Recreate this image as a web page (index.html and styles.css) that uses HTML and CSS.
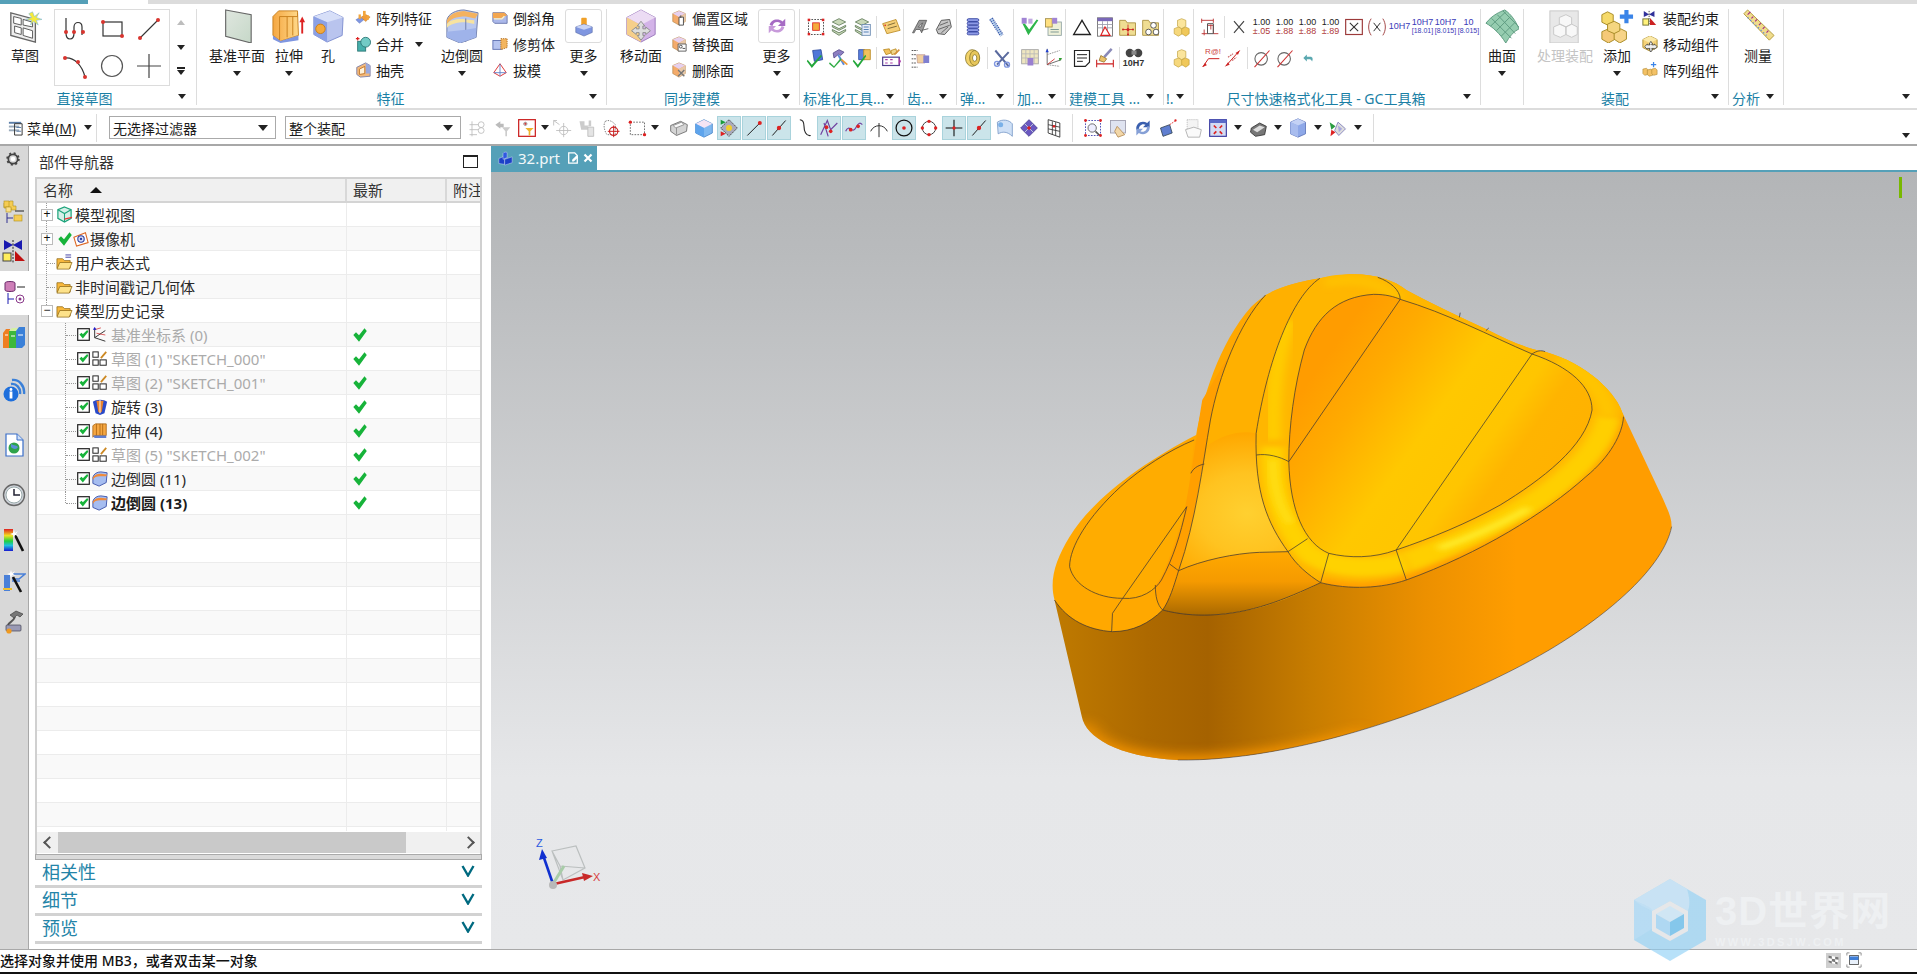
FILE: index.html
```html
<!DOCTYPE html>
<html lang="zh">
<head>
<meta charset="utf-8">
<title>部件导航器</title>
<link rel="stylesheet" href="styles.css">
</head>
<body>
<svg class="defs" xmlns="http://www.w3.org/2000/svg">
<defs>
<linearGradient id="gBlue" x1="0" y1="0" x2="0" y2="1"><stop offset="0" stop-color="#c9d4f5"/><stop offset="1" stop-color="#6f86d6"/></linearGradient>
<linearGradient id="gOr" x1="0" y1="0" x2="1" y2="0"><stop offset="0" stop-color="#f5a742"/><stop offset="1" stop-color="#ffd98a"/></linearGradient>
<linearGradient id="gYe" x1="0" y1="0" x2="0" y2="1"><stop offset="0" stop-color="#fff0a8"/><stop offset="1" stop-color="#e8b84a"/></linearGradient>
<linearGradient id="gPlane" x1="0" y1="0" x2="1" y2="1"><stop offset="0" stop-color="#dfe6df"/><stop offset="1" stop-color="#c6d8c8"/></linearGradient>
</defs>
<symbol id="sketch" viewBox="0 0 36 36"><path d="M3 4 29 11V35L3 28Z" fill="#eee" stroke="#666" stroke-width="1.4"/><path d="M6 8 14 10V17L6 15ZM16 11 26 14V19L16 17ZM7 18 14 20V27L7 25ZM16 20 26 23V31L16 28Z" fill="#fff" stroke="#555"/><path d="M26 3 28 8 33 4 30 9 36 11 30 12 32 17 27 13 24 17 25 12 19 11 25 9 22 5Z" fill="#f6ea3a" stroke="#7ab8e0" stroke-width=".6"/></symbol>
<symbol id="spline" viewBox="0 0 30 30"><path d="M6 4V19C6 27 14 27 14 19V13C14 7 22 7 22 13V21" fill="none" stroke="#333" stroke-width="1.2"/><g fill="#d8352f"><circle cx="6" cy="18" r="2"/><circle cx="14" cy="18" r="2"/><circle cx="23" cy="18" r="2"/></g></symbol>
<symbol id="srect" viewBox="0 0 30 30"><rect x="6" y="8" width="19" height="14" fill="none" stroke="#333" stroke-width="1.2"/><g fill="#d8352f"><circle cx="6" cy="8" r="2"/><circle cx="25" cy="22" r="2"/></g></symbol>
<symbol id="sline" viewBox="0 0 30 30"><path d="M6 24 24 6" stroke="#333" stroke-width="1.1"/><g fill="#d8352f"><circle cx="6" cy="24" r="2"/><circle cx="24" cy="6" r="2"/></g></symbol>
<symbol id="sarc" viewBox="0 0 30 30"><path d="M5 7C14 6 22 14 25 26" fill="none" stroke="#333" stroke-width="1.2"/><g fill="#d8352f"><circle cx="5" cy="7" r="2"/><circle cx="18" cy="11" r="2"/><circle cx="25" cy="26" r="2"/></g></symbol>
<symbol id="scirc" viewBox="0 0 30 30"><circle cx="15" cy="15" r="10.5" fill="none" stroke="#555" stroke-width="1.2"/></symbol>
<symbol id="splus" viewBox="0 0 30 30"><path d="M15 3V27M3 15H27" stroke="#444" stroke-width="1.2"/></symbol>
<symbol id="datum" viewBox="0 0 36 36"><path d="M6 1 33 6V36L6 29Z" fill="url(#gPlane)" stroke="#666" stroke-width="1.2"/></symbol>
<symbol id="extrude" viewBox="0 0 36 36"><path d="M1 8 7 2H27L28 28 9 34 1 28Z" fill="url(#gOr)" stroke="#c8801e"/><path d="M8 8H27V4M8 8V33M16 8V30M22 8V28" fill="none" stroke="#c8801e"/><path d="M1 28 9 34 28 28 28 33 9 36 1 32Z" fill="#7f96e0"/><path d="M32 26V13" stroke="#d22" stroke-width="2"/><path d="M29 14 32 8 35 14Z" fill="#d22"/></symbol>
<symbol id="hole" viewBox="0 0 36 36"><path d="M3 8 20 2 34 9 33 28 17 35 3 27Z" fill="#b9c4ee" stroke="#7f8fd0"/><path d="M3 8 17 14 34 9 20 2Z" fill="#d7dff8"/><path d="M17 14V35L3 27V8Z" fill="#8ba0e4"/><circle cx="10" cy="21" r="5" fill="#f4a93b" stroke="#c97d16"/></symbol>
<symbol id="fillet" viewBox="0 0 36 36"><path d="M2 12C3 5 12 1 20 1L35 4 33 30 16 36 2 30Z" fill="#b9c8ef" stroke="#6c7aa8"/><path d="M2 12C4 6 12 2 20 2L35 5 32 10 22 8C12 8 5 10 2 17Z" fill="#f4b260"/><path d="M2 16C6 11 14 10 22 11L31 12V16L22 14C12 14 5 16 2 20Z" fill="#f7e3a0"/><path d="M22 10V35" stroke="#6c7aa8"/><path d="M2 24 22 22 33 20V30L16 36 2 30Z" fill="#9fb3ea"/></symbol>
<symbol id="pattern" viewBox="0 0 18 18"><path d="M1 11 6 8 10 11 5 15Z" fill="#7f96e0" stroke="#5970bf" stroke-width=".5"/><path d="M7 8 12 5 17 8 12 13Z" fill="#f29b38" stroke="#b06a15" stroke-width=".5"/><rect x="9" y="1" width="3" height="6" fill="#f2a63e"/><rect x="4" y="5" width="2.6" height="5" fill="#f2a63e"/><rect x="13" y="6" width="2.6" height="5" fill="#f2a63e"/></symbol>
<symbol id="unite" viewBox="0 0 18 18"><path d="M1 3H5M3 1V5" stroke="#d22" stroke-width="1.3"/><rect x="3" y="6" width="9" height="11" fill="#46b0ac" stroke="#2c7775"/><circle cx="12" cy="7" r="5.5" fill="#73cbc6" stroke="#2c7775"/></symbol>
<symbol id="shell" viewBox="0 0 18 18"><path d="M2 6 12 1 17 4V16L6 17 2 14Z" fill="#f3b87a" stroke="#7a7ea8"/><path d="M12 1V13H17V4Z" fill="#9aa9de"/><path d="M5 8 11 5V13L5 14Z" fill="#fff3dc" stroke="#c0711e"/></symbol>
<symbol id="chamfer" viewBox="0 0 18 18"><path d="M1 3H14L17 6V15H3L1 13Z" fill="#abb8ea" stroke="#6674aa"/><path d="M1 3H14L17 6 10 9H1Z" fill="#f3a64f"/><path d="M2 10H11L14 7" fill="none" stroke="#fff2c0" stroke-width="1.6"/></symbol>
<symbol id="trim" viewBox="0 0 18 18"><rect x="1" y="5" width="10" height="10" fill="#b6c4f0" stroke="#5c6eb0"/><path d="M10 3H17V13L11 15H10Z" fill="#f3b560" stroke="#b06a15" stroke-dasharray="1.4 1"/></symbol>
<symbol id="draft" viewBox="0 0 18 18"><path d="M9 2 16 12 9 16 2 12Z" fill="#fff" stroke="#d22" stroke-width="1"/><path d="M9 2V16M2 12H16" stroke="#5c7ec8"/></symbol>
<symbol id="morefeat" viewBox="0 0 24 24"><rect x="9" y="3" width="6" height="10" rx="1" fill="#f0a028"/><path d="M3 13 12 10 21 13V19L12 23 3 19Z" fill="#7f96e0" stroke="#52649f" stroke-width=".6"/><path d="M3 13 12 16 21 13 12 10Z" fill="#c9d4f5"/></symbol>
<symbol id="moveface" viewBox="0 0 36 36"><path d="M18 1 33 9V27L18 35 3 27V9Z" fill="#d3b3e8" stroke="#9a78bb"/><path d="M18 1 33 9 18 17 3 9Z" fill="#ecdcf4"/><path d="M3 9 18 17V35L3 27Z" fill="#f6cf8a"/><g stroke="#8d8d8d" stroke-width="1" fill="#ddd"><path d="M18 13 22 18 20 18V21H23V19L28 23 23 27V25H20V28H22L18 33 14 28H16V25H13V27L8 23 13 19V21H16V18H14Z"/></g></symbol>
<symbol id="cubeb" viewBox="0 0 18 18"><path d="M9 1 16 4V13L9 17 2 13V4Z" fill="#f4ab6b" stroke="#b0803f" stroke-width=".7"/><path d="M9 1 16 4 9 8 2 4Z" fill="#e6d0ee"/><path d="M9 8 16 4V13L9 17Z" fill="#e8c8a8"/></symbol>
<symbol id="offset" viewBox="0 0 18 18"><use href="#cubeb"/><path d="M9 8H14V17H9ZM11 6V9" fill="#fff" stroke="#444"/></symbol>
<symbol id="replace" viewBox="0 0 18 18"><use href="#cubeb"/><path d="M8 9H17V17H8Z" fill="#fff" stroke="#555"/><circle cx="11" cy="12" r="1.6" fill="none" stroke="#444"/><path d="M13 14H16" stroke="#444"/></symbol>
<symbol id="delface" viewBox="0 0 18 18"><use href="#cubeb"/><path d="M8 9 15 16M15 9 8 16" stroke="#777" stroke-width="1.6"/></symbol>
<symbol id="syncmore" viewBox="0 0 24 24"><path d="M4 11C5 5 13 3 18 7L21 4V12H13L16 9C12 6 8 8 7 12Z" fill="#a66bc4"/><path d="M20 13C19 19 11 21 6 17L3 20V12H11L8 15C12 18 16 16 17 12Z" fill="#c79ada"/></symbol>
<symbol id="stdbox" viewBox="0 0 24 24"><rect x="3" y="3" width="18" height="18" fill="#fff" stroke="#333" stroke-dasharray="2 1.5"/><rect x="8" y="7" width="8" height="9" fill="#f4ab3b" stroke="#d22"/><g fill="#d22"><rect x="2" y="2" width="3" height="3"/><rect x="19" y="2" width="3" height="3"/><rect x="2" y="19" width="3" height="3"/><rect x="19" y="19" width="3" height="3"/></g></symbol>
<symbol id="stack" viewBox="0 0 24 24"><g fill="#c9d8b8" stroke="#5f7a58"><path d="M12 2 20 6 12 10 4 6Z"/><path d="M4 10 12 14 20 10 20 12 12 16 4 12Z"/><path d="M4 15 12 19 20 15 20 17 12 22 4 17Z"/></g></symbol>
<symbol id="stack2" viewBox="0 0 24 24"><use href="#stack"/><rect x="12" y="9" width="10" height="13" fill="#e8eef8" stroke="#6a8ab0"/><path d="M14 12H20M14 15H20M14 18H20" stroke="#3a6ea8"/></symbol>
<symbol id="tag" viewBox="0 0 24 24"><path d="M2 8 18 3 23 16 7 20Z" fill="#f5cf77" stroke="#ba8a24"/><path d="M8 10 17 7M8 14 19 11" stroke="#6c5a2c"/><circle cx="5" cy="10" r="1" fill="#d22"/></symbol>
<symbol id="bluechk" viewBox="0 0 24 24"><path d="M8 3 18 2 20 14 10 16Z" fill="#4f76d8" stroke="#2c4a9f"/><path d="M2 14 7 20 18 8 19 10 7 24 1 16Z" fill="#23a73a"/></symbol>
<symbol id="hammer" viewBox="0 0 24 24"><path d="M5 6 12 2 18 5 14 9 12 7 6 12Z" fill="#8d7fc2" stroke="#554a8c"/><path d="M11 8 18 20" stroke="#5c8ad8" stroke-width="2.4"/><path d="M1 17 6 22 14 12 15 14 6 24 0 19Z" fill="#32ad46"/><path d="M15 14 22 20" stroke="#ef9a33" stroke-width="2"/></symbol>
<symbol id="bluechk2" viewBox="0 0 24 24"><path d="M8 2H15V14H8Z" fill="#5b82e0" stroke="#2c4a9f"/><path d="M14 2H22V14H14Z" fill="#f1c15c" stroke="#ba8a24"/><path d="M2 14 7 20 16 8 17 10 7 24 1 16Z" fill="#23a73a"/></symbol>
<symbol id="pencilist" viewBox="0 0 24 24"><path d="M3 2 10 1 12 6 6 8Z" fill="#f1c15c" stroke="#ba8a24"/><path d="M12 3 18 1 19 6 13 8Z" fill="#f1d58c" stroke="#ba8a24"/><path d="M16 8 22 2" stroke="#d4903c" stroke-width="2"/><rect x="2" y="11" width="20" height="10" fill="#fff" stroke="#4a3a8a" stroke-width="1.4"/><path d="M5 14H8M11 14H14M5 18H8M11 18H14" stroke="#a83aa8" stroke-width="1.4"/><path d="M21 11 24 16 21 21Z" fill="#a83aa8"/></symbol>
<symbol id="gearA" viewBox="0 0 24 24"><path d="M3 19 11 4H20L14 19 12 15H7L5 19ZM10 12H13L15 7Z" fill="#9a9a9a" stroke="#444" stroke-width=".8"/><path d="M14 16 22 14" stroke="#555"/></symbol>
<symbol id="gearB" viewBox="0 0 24 24"><path d="M4 15 10 4 20 3 22 12 14 21 6 20Z" fill="#c6c6c6" stroke="#444"/><path d="M8 10 18 6M6 15 20 10M10 19 18 12" stroke="#555"/></symbol>
<symbol id="handd" viewBox="0 0 24 24"><path d="M2 3H9M2 8H7M2 13H7M2 18H7M2 23H9" stroke="#333" stroke-dasharray="2 1"/><path d="M8 8H18V18H9Z" fill="#f0cfa0" stroke="#a77" stroke-width=".6"/><rect x="16" y="9" width="7" height="9" fill="#7f7fd0"/></symbol>
<symbol id="coil" viewBox="0 0 24 24"><g fill="#8d9ae6" stroke="#2f3f9e"><rect x="5" y="2" width="14" height="3.4" rx="1.7"/><rect x="5" y="6" width="14" height="3.4" rx="1.7"/><rect x="5" y="10" width="14" height="3.4" rx="1.7"/><rect x="5" y="14" width="14" height="3.4" rx="1.7"/><rect x="5" y="18" width="14" height="3.4" rx="1.7"/></g></symbol>
<symbol id="spring" viewBox="0 0 24 24"><path d="M6 2 19 22" stroke="#3a5aaa" stroke-width="5" stroke-dasharray="1.6 1"/><path d="M6 2 19 22" stroke="#a6c4e8" stroke-width="2"/></symbol>
<symbol id="roll" viewBox="0 0 24 24"><ellipse cx="11" cy="12" rx="8" ry="10" fill="#f3d36a" stroke="#8a7a2c"/><ellipse cx="14" cy="12" rx="6" ry="9" fill="#e7c65a" stroke="#8a7a2c"/><ellipse cx="14" cy="12" rx="2.6" ry="4" fill="#fff" stroke="#8a7a2c"/></symbol>
<symbol id="scissor" viewBox="0 0 24 24"><path d="M4 3 20 22M20 5 6 20" stroke="#5a6a9e" stroke-width="2.4"/><circle cx="6" cy="19" r="3" fill="none" stroke="#7f96e0" stroke-width="1.6"/><circle cx="18" cy="20" r="3" fill="none" stroke="#7f96e0" stroke-width="1.6"/></symbol>
<symbol id="vchk" viewBox="0 0 24 24"><rect x="2" y="1" width="6" height="7" fill="#a184d4"/><path d="M3 8 10 22 22 4 20 3 11 15 6 8Z" fill="#2db54a"/><rect x="10" y="2" width="5" height="6" fill="#c0a8e0"/></symbol>
<symbol id="vdoc" viewBox="0 0 24 24"><rect x="6" y="6" width="16" height="16" fill="#eef0d8" stroke="#8ca0a0"/><rect x="3" y="2" width="8" height="10" fill="#ffe080" stroke="#a08a44"/><rect x="11" y="1" width="6" height="7" fill="#a184d4"/><path d="M9 15H19M9 18H19" stroke="#6a8a8a"/></symbol>
<symbol id="gridv" viewBox="0 0 24 24"><rect x="2" y="2" width="20" height="17" fill="#efe6c0" stroke="#a0a0a0"/><path d="M2 7H22M2 12H22M7 2V19M12 2V19M17 2V19" stroke="#b8b8b8"/><rect x="9" y="12" width="7" height="9" fill="#9a80d0"/></symbol>
<symbol id="axes3d" viewBox="0 0 24 24"><path d="M5 1V20L22 14" fill="none" stroke="#555"/><path d="M5 8 20 3M5 20 20 22" stroke="#888" stroke-dasharray="2 1"/><path d="M5 1 3 5H7Z" fill="#2040d0"/><path d="M23 12 19 12 20 16Z" fill="#2ca02c"/><path d="M5 20 14 13" stroke="#c22"/></symbol>
<symbol id="tri" viewBox="0 0 24 24"><path d="M12 4 22 21H2Z" fill="#fff" stroke="#222" stroke-width="1.6"/></symbol>
<symbol id="tablet" viewBox="0 0 24 24"><rect x="3" y="1" width="18" height="22" fill="#fff" stroke="#666"/><rect x="3" y="1" width="18" height="4" fill="#7a68b8"/><path d="M3 9H21M3 13H21M9 5V23M15 5V23" stroke="#99a"/><path d="M12 12 18 22H7Z" fill="#fff" stroke="#d22" stroke-width="1.4"/></symbol>
<symbol id="folderst" viewBox="0 0 24 24"><path d="M2 4H9L11 7H21V22H2Z" fill="#efdd92" stroke="#a68c38"/><path d="M12 9V21M6 15H18" stroke="#c22"/><g fill="#c22"><circle cx="12" cy="15" r="1.8"/><circle cx="6" cy="15" r="1.2"/><circle cx="18" cy="15" r="1.2"/><circle cx="12" cy="21" r="1.2"/></g></symbol>
<symbol id="foldercir" viewBox="0 0 24 24"><path d="M2 4H9L11 7H21V22H2Z" fill="#efdd92" stroke="#a68c38"/><circle cx="15" cy="10" r="3.4" fill="#fff" stroke="#444"/><circle cx="9" cy="18" r="3.4" fill="#fff" stroke="#444"/><circle cx="18" cy="18" r="3.4" fill="#fff" stroke="#444"/></symbol>
<symbol id="note" viewBox="0 0 24 24"><path d="M3 3H21V17L16 22H3Z" fill="#fff" stroke="#222" stroke-width="1.4"/><path d="M6 8H18M6 12H18M6 16H13" stroke="#222" stroke-width="1.2"/></symbol>
<symbol id="brush" viewBox="0 0 24 24"><path d="M20 1 11 11" stroke="#8a8ab8" stroke-width="3"/><path d="M7 9 14 13 11 17 5 15Z" fill="#eac26a" stroke="#9a7a30"/><path d="M2 14V23M22 14V23M2 19H22" stroke="#c22" stroke-width="1.3"/></symbol>
<symbol id="blocks" viewBox="0 0 24 24"><g stroke="#b8962c" stroke-width=".7"><path d="M5 14 10 12 15 14V20L10 23 5 20Z" fill="#f6d87c"/><path d="M14 14 19 12 23 14V20L19 23 14 20Z" fill="#f0c85a"/><path d="M9 4 14 2 19 4V11L14 14 9 11Z" fill="#fbe59c"/></g></symbol>
<symbol id="dim1" viewBox="0 0 24 24"><path d="M2 20H9V10H16V20H22M2 4H16M2 2V7M16 2V7M5 15V22M13 15 13 9" fill="none" stroke="#b33" stroke-width="1.1"/><path d="M9 20V8H16V20Z" fill="none" stroke="#555" stroke-width="1.2"/></symbol>
<symbol id="xsym" viewBox="0 0 24 24"><path d="M6 5 18 19M18 5 6 19" stroke="#444" stroke-width="1.4"/></symbol>
<symbol id="diam" viewBox="0 0 24 24"><circle cx="11" cy="13" r="7.5" fill="none" stroke="#666" stroke-width="1.3"/><path d="M3 23 21 3" stroke="#c33" stroke-width="1.3"/></symbol>
<symbol id="undo" viewBox="0 0 24 24"><path d="M4 12 10 6V10H16C20 10 21 14 19 18 18 15 16 14 14 14H10V18Z" fill="#5aa8b0"/></symbol>
<symbol id="xbox" viewBox="0 0 24 24"><rect x="2" y="3" width="20" height="18" fill="#fff" stroke="#9c3a3a" stroke-width="1.4"/><path d="M7 7 17 17M17 7 7 17" stroke="#333" stroke-width="1.3"/></symbol>
<symbol id="xparen" viewBox="0 0 24 24"><path d="M5 2C1 8 1 16 5 22M19 2C23 8 23 16 19 22" fill="none" stroke="#9c3a3a" stroke-width="1.1"/><path d="M8 7 16 17M16 7 8 17" stroke="#333" stroke-width="1.2"/></symbol>
<symbol id="surface" viewBox="0 0 36 36"><path d="M1 15C8 6 16 3 21 1 28 6 32 12 36 21 30 24 26 29 22 36 16 26 8 19 1 15Z" fill="#96cdb0" stroke="#5c9a80"/><path d="M7 10 28 31M13 6 32 26M19 2 36 19M6 18 22 3M12 23 27 8M17 29 32 14" stroke="#5c9a80" fill="none"/></symbol>
<symbol id="asmgrey" viewBox="0 0 36 36"><rect x="2" y="2" width="30" height="34" fill="#e8e8e8" stroke="#c8c8c8"/><path d="M12 9 19 6 25 9V16L19 19 12 16ZM6 19 13 16 19 19V27L13 30 6 27ZM19 19 25 16 31 19V27L25 30 19 27Z" fill="#f8f8f8" stroke="#c8c8c8"/></symbol>
<symbol id="add" viewBox="0 0 36 36"><path d="M2 6 8 3 14 6V14L8 17 2 14Z" fill="#f6da6a" stroke="#a78a24"/><path d="M2 24 9 21 16 24V32L9 36 2 32Z" fill="#f5c978" stroke="#a78a24"/><path d="M15 24 22 21 28 24V32L21 36 15 32Z" fill="#f7d488" stroke="#a78a24"/><path d="M8 16 15 13 21 16V23L15 26 8 23Z" fill="#f5d680" stroke="#a78a24"/><path d="M28 1V15M21 8H35" stroke="#3a84e8" stroke-width="4.4"/></symbol>
<symbol id="asmc" viewBox="0 0 18 18"><path d="M2 1 8 5 14 1V8L8 5 2 8Z" fill="#30309a"/><path d="M8 1V17" stroke="#333" stroke-dasharray="1.5 1.2"/><rect x="1" y="10" width="6.5" height="7" fill="#fff27a" stroke="#6a6a30"/><path d="M9 9 16 17H9Z" fill="#c22"/></symbol>
<symbol id="movec" viewBox="0 0 18 18"><path d="M9 0 17 4V13L9 17 1 13V4Z" fill="#f5d278" stroke="#a98b2c"/><path d="M1 4 9 8 17 4 9 0Z" fill="#fbe9a8"/><path d="M10 6 12 9H11V10H14V9L17 12 14 15V14H11V15H12L10 18 8 15H9V14H6V15L3 12 6 9V10H9V9H8Z" fill="#eee" stroke="#333" stroke-width=".8"/></symbol>
<symbol id="patc" viewBox="0 0 18 18"><g fill="#f3c166" stroke="#a9832c" stroke-width=".6"><path d="M1 8 5 7 7 9V14L3 15 1 13Z"/><path d="M6 9 10 8 12 10V15L8 16 6 14Z"/><path d="M11 8 15 7 17 9V14L13 15 11 13Z"/></g><path d="M13 0V6M10 3H16" stroke="#3a84e8" stroke-width="1.4"/></symbol>
<symbol id="ruler" viewBox="0 0 36 36"><path d="M3 5 7 1 35 28 30 33Z" fill="#f0dc8c" stroke="#b29a3c"/><path d="M7 6 10 3M11 10 13 8M15 13 17 11M19 17 21 15M23 21 25 19M27 25 29 23" stroke="#a52a8a" stroke-width="1.2"/><path d="M7 9 27 28" stroke="#5a8ae0" stroke-dasharray="1.4 2.4" stroke-width="1.3"/></symbol>
<symbol id="menuic" viewBox="0 0 18 18"><rect x="2" y="3" width="13" height="2" fill="#5b7ea8"/><rect x="2" y="7" width="11" height="2" fill="#9ab"/><rect x="2" y="11" width="11" height="2" fill="#9ab"/><path d="M8 5H16V17H8Z" fill="none" stroke="#333"/><path d="M10 9H15M10 13H15" stroke="#5b7ea8"/></symbol>
<symbol id="fgrey1" viewBox="0 0 24 24"><path d="M6 4V22M3 8H14M3 14H14M3 20H12" stroke="#bbb" fill="none"/><circle cx="17" cy="8" r="3.5" fill="none" stroke="#bbb"/><circle cx="17" cy="15" r="3.5" fill="none" stroke="#bbb"/></symbol>
<symbol id="fgrey2" viewBox="0 0 24 24"><path d="M4 8 10 4V7H14V11H10V13Z" fill="#bbb"/><path d="M12 11H22L18 16V22H16V16Z" fill="#ccc"/></symbol>
<symbol id="filterred" viewBox="0 0 24 24"><rect x="2" y="2" width="20" height="20" fill="#fff" stroke="#c22" stroke-width="1.5"/><path d="M8 7H12M10 5V9" stroke="#c22"/><circle cx="10" cy="7" r="2" fill="none" stroke="#999"/><path d="M10 12H20L16 16V21H14V16Z" fill="#eeb42c"/></symbol>
<symbol id="fgrey3" viewBox="0 0 24 24"><path d="M6 3H2V9M2 3 9 8" stroke="#bbb" fill="none"/><circle cx="14" cy="15" r="5" fill="none" stroke="#bbb"/><path d="M14 6V23M5 15H23" stroke="#bbb"/></symbol>
<symbol id="fgrey4" viewBox="0 0 24 24"><path d="M3 4H9V9H14V3H17V10H13V14H5Z" fill="#ccc"/><path d="M13 11H20V22H13Z" fill="#e4e4e4" stroke="#bbb"/></symbol>
<symbol id="selred" viewBox="0 0 24 24"><path d="M4 4C1 8 3 16 6 20H16V8C12 3 7 2 4 4Z" fill="none" stroke="#666" stroke-dasharray="1.6 1.4"/><circle cx="14" cy="16" r="5" fill="none" stroke="#c22" stroke-width="1.4"/><path d="M14 9V23M7 16H21" stroke="#c22" stroke-width="1.2"/></symbol>
<symbol id="seldash" viewBox="0 0 24 24"><rect x="4" y="5" width="17" height="15" fill="none" stroke="#555" stroke-dasharray="2 1.5"/><circle cx="4" cy="5" r="2" fill="#d22"/><circle cx="21" cy="20" r="2" fill="#d22"/></symbol>
<symbol id="box1" viewBox="0 0 24 24"><path d="M2 9 14 4 22 8 21 16 9 21 2 16Z" fill="#d4d4d4" stroke="#666"/><path d="M5 9 15 5 18 8 8 12Z" fill="#f8f8f8" stroke="#888"/><path d="M9 12V20" stroke="#888"/></symbol>
<symbol id="box2" viewBox="0 0 24 24"><path d="M12 2 22 7V18L12 23 2 18V7Z" fill="#7fb8f0" stroke="#4a86c8"/><path d="M2 7 12 12 22 7 12 2Z" fill="#f4e4f4"/><path d="M2 7 12 12V23L2 18Z" fill="#5ea4ec"/></symbol>
<symbol id="snapc" viewBox="0 0 24 24"><path d="M12 2 22 12 12 22 2 12Z" fill="#aab" stroke="#333" stroke-dasharray="2 1"/><circle cx="12" cy="12" r="3.6" fill="#f2cf2e"/><path d="M2 2 8 5 2 8Z" fill="#1a9c3a"/><path d="M2 16 8 19 2 22Z" fill="#d22"/></symbol>
<symbol id="endp" viewBox="0 0 24 24"><path d="M4 21 20 5" stroke="#222" stroke-width="1.2"/><circle cx="19" cy="6" r="2.4" fill="#d22"/></symbol>
<symbol id="midp" viewBox="0 0 24 24"><path d="M4 21 20 3" stroke="#222" stroke-width="1.2"/><circle cx="12" cy="12" r="2.6" fill="#d22"/></symbol>
<symbol id="curvp" viewBox="0 0 24 24"><path d="M7 2C10 2 12 5 12 10S14 22 20 21" fill="none" stroke="#222" stroke-width="1.3"/></symbol>
<symbol id="intp" viewBox="0 0 24 24"><path d="M2 20 10 3 14 14 22 6M6 6 11 22" fill="none" stroke="#7040a0" stroke-width="1.4"/><circle cx="9" cy="11" r="2.2" fill="#d22"/><circle cx="14" cy="16" r="2.2" fill="#d22"/></symbol>
<symbol id="wave" viewBox="0 0 24 24"><path d="M2 16C6 6 10 20 14 12S20 6 22 8" fill="none" stroke="#7040a0" stroke-width="1.4"/><circle cx="8" cy="14" r="2.2" fill="#d22"/><circle cx="17" cy="10" r="2.2" fill="#d22"/></symbol>
<symbol id="tanp" viewBox="0 0 24 24"><path d="M2 16C6 7 18 7 22 16M12 6V23" fill="none" stroke="#333" stroke-width="1.2"/></symbol>
<symbol id="cenp" viewBox="0 0 24 24"><circle cx="12" cy="12" r="9.5" fill="none" stroke="#111" stroke-width="1.5"/><circle cx="12" cy="12" r="2.2" fill="#d22"/></symbol>
<symbol id="quad" viewBox="0 0 24 24"><circle cx="12" cy="12" r="8" fill="none" stroke="#444" stroke-width="1.2"/><g fill="#d22"><circle cx="12" cy="4" r="2"/><circle cx="12" cy="20" r="2"/><circle cx="4" cy="12" r="2"/><circle cx="20" cy="12" r="2"/></g></symbol>
<symbol id="crossp" viewBox="0 0 24 24"><path d="M12 2V22M2 12H22" stroke="#111" stroke-width="1.3"/><circle cx="12" cy="12" r="2" fill="#d22"/></symbol>
<symbol id="facep" viewBox="0 0 24 24"><path d="M4 5C10 1 18 2 22 7V22C16 16 10 16 5 19Z" fill="#cfe0f6" stroke="#7a9ac8"/><circle cx="8" cy="8" r="3" fill="#7ab0e8"/></symbol>
<symbol id="meshp" viewBox="0 0 24 24"><path d="M12 2 22 12 12 22 2 12Z" fill="#6a58c0" stroke="#453a90"/><path d="M7 7 17 17M17 7 7 17" stroke="#cdd"/><circle cx="12" cy="12" r="2.2" fill="#d22"/></symbol>
<symbol id="gridp" viewBox="0 0 24 24"><path d="M5 2 19 6V23L5 18Z" fill="#fff" stroke="#222"/><path d="M5 8 19 11M5 13 19 16M10 4V20M14 5V21" stroke="#333"/><circle cx="12" cy="10" r="1.6" fill="#d22"/></symbol>
<symbol id="zoomf" viewBox="0 0 24 24"><rect x="3" y="3" width="18" height="18" fill="none" stroke="#33a" stroke-dasharray="2 1.5"/><circle cx="11" cy="12" r="5" fill="#eef" stroke="#555"/><path d="M15 16 20 21" stroke="#555" stroke-width="2"/><g fill="#d22"><circle cx="3" cy="3" r="1.7"/><circle cx="21" cy="3" r="1.7"/><circle cx="3" cy="21" r="1.7"/><circle cx="21" cy="21" r="1.7"/></g></symbol>
<symbol id="pan" viewBox="0 0 24 24"><rect x="3" y="3" width="18" height="15" fill="#dfe3f0" stroke="#99a"/><path d="M11 10 20 20 12 23 8 16Z" fill="#f2d7a8" stroke="#b38a55"/></symbol>
<symbol id="rotate" viewBox="0 0 24 24"><path d="M4 14C3 7 10 2 17 6L20 3V11H12L15 8C11 6 7 9 7 14Z" fill="#3a5fae"/><path d="M20 10C21 17 14 22 7 18L4 21V13H12L9 16C13 18 17 15 17 10Z" fill="#86a0d6"/></symbol>
<symbol id="persp" viewBox="0 0 24 24"><path d="M3 12 14 8 17 18 6 22Z" fill="#5f7ed0" stroke="#345"/><path d="M14 8 20 4" stroke="#d22" stroke-dasharray="2 1"/><circle cx="21" cy="3" r="1.4" fill="#d22"/></symbol>
<symbol id="lightdoc" viewBox="0 0 24 24"><rect x="5" y="2" width="13" height="14" fill="#f4f4f4" stroke="#bbb" stroke-dasharray="1.5 1"/><path d="M3 14 13 11 22 14 20 23H6Z" fill="#fafafa" stroke="#aaa"/></symbol>
<symbol id="winlay" viewBox="0 0 24 24"><rect x="2" y="2" width="20" height="20" fill="#d4dcf4" stroke="#3a3aa0" stroke-width="1.4"/><rect x="2" y="2" width="20" height="4" fill="#5a6ac8"/><path d="M7 9 10 12M17 9 14 12M7 19 10 16M17 19 14 16" stroke="#d22" stroke-width="2"/></symbol>
<symbol id="render" viewBox="0 0 24 24"><path d="M4 12 14 6 22 10 20 20 9 22 3 17Z" fill="#777" stroke="#333"/><path d="M6 14 14 9 20 11 11 17Z" fill="#ddd"/></symbol>
<symbol id="cubebl" viewBox="0 0 24 24"><path d="M12 1 21 5V19L12 23 3 19V5Z" fill="#8ea8e8" stroke="#5c74b8"/><path d="M3 5 12 9 21 5 12 1Z" fill="#c4d2f5"/><path d="M3 5 12 9V23L3 19Z" fill="#a8bcee"/></symbol>
<symbol id="vis" viewBox="0 0 24 24"><path d="M12 5 21 13 13 21 8 15Z" fill="#ddd" stroke="#7a7ab8"/><path d="M12 9 17 13 13 17Z" fill="#a8a8e0"/><path d="M2 5 9 10 4 14Z" fill="#2a9c40"/><path d="M4 14 9 17 3 22Z" fill="#d22"/></symbol>
<symbol id="gear" viewBox="0 0 24 24"><circle cx="12" cy="12" r="7" fill="none" stroke="#444" stroke-width="2.6"/><circle cx="12" cy="12" r="8.6" fill="none" stroke="#444" stroke-width="3" stroke-dasharray="3 3.75"/><circle cx="12" cy="12" r="3.4" fill="#fff"/></symbol>
<symbol id="navasm" viewBox="0 0 24 24"><path d="M2 4H6L8 2H11V7H14V11H9V9H2Z" fill="#f5cc52" stroke="#b0901c" stroke-width=".6"/><rect x="2" y="2" width="5" height="6" fill="#f5cc52" stroke="#b0901c" stroke-width=".6"/><rect x="4" y="8" width="5" height="5" fill="#fbe08a" stroke="#b0901c" stroke-width=".6"/><path d="M13 12H22" stroke="#222"/><path d="M5 14V24M5 19H11" stroke="#303090" stroke-width="1"/><rect x="12" y="16" width="8" height="6" fill="#f5cc52" stroke="#b0901c" stroke-width=".6"/></symbol>
<symbol id="navcon" viewBox="0 0 24 24"><path d="M2 1 11 6 20 1V11L11 6 2 11Z" fill="#1a1ab0"/><path d="M11 1V24" stroke="#222" stroke-dasharray="2 1.4"/><rect x="1" y="14" width="8" height="8" fill="#ffee5c" stroke="#444"/><path d="M13 12 23 22H13Z" fill="#c01010"/></symbol>
<symbol id="navpart" viewBox="0 0 24 24"><path d="M2 2C2 0 12 0 12 2V9C12 11 2 11 2 9Z" fill="#ce7fb8" stroke="#6a2a6a"/><path d="M14 6H22" stroke="#222"/><path d="M5 12V23M5 18H11" stroke="#1a1ab0"/><circle cx="17" cy="18" r="4" fill="none" stroke="#8a3a8a"/><circle cx="17" cy="18" r="1.5" fill="#8a3a8a"/></symbol>
<symbol id="books" viewBox="0 0 24 24"><path d="M1 7 4 3H8V22H1Z" fill="#ee7e22"/><rect x="7" y="5" width="7" height="17" fill="#3cb83c"/><path d="M7 5 10 2H16L14 5Z" fill="#d4f0a0"/><path d="M14 5 17 1H23V19L20 22H14Z" fill="#3a80d8"/><path d="M3 9H6M9 10H13M16 9H21" stroke="#fff"/></symbol>
<symbol id="infoic" viewBox="0 0 24 24"><circle cx="9" cy="16" r="7.5" fill="#1e6fdc"/><circle cx="9" cy="11.5" r="1.4" fill="#fff"/><rect x="7.6" y="13.5" width="2.8" height="7" fill="#fff"/><path d="M9 6C14 5 19 10 18 16M10 2C17 1 23 8 22 16" fill="none" stroke="#3a80d8" stroke-width="2.4"/></symbol>
<symbol id="webdoc" viewBox="0 0 24 24"><path d="M4 1H15L21 7V23H4Z" fill="#fff" stroke="#3a6ec8" stroke-width="1.2"/><path d="M15 1V7H21" fill="#cfe0f8" stroke="#3a6ec8"/><circle cx="12" cy="15" r="5.5" fill="#2ea34a"/><path d="M9 11C12 13 15 12 16 14 15 17 10 16 9 14Z" fill="#5a90d8"/></symbol>
<symbol id="clock" viewBox="0 0 24 24"><circle cx="12" cy="12" r="10.5" fill="#cfd3da" stroke="#666" stroke-width="1.4"/><circle cx="12" cy="12" r="8" fill="#fff" stroke="#9aa"/><path d="M12 6V12H18" fill="none" stroke="#223" stroke-width="1.5"/></symbol>
<symbol id="rainbow" viewBox="0 0 24 24"><defs><linearGradient id="rb" x1="0" y1="0" x2="0" y2="1"><stop offset="0" stop-color="#e02020"/><stop offset=".3" stop-color="#f0e020"/><stop offset=".55" stop-color="#20d040"/><stop offset=".75" stop-color="#20c0e0"/><stop offset="1" stop-color="#1818d0"/></linearGradient></defs><rect x="2" y="1" width="9" height="22" fill="url(#rb)"/><path d="M13 7 21 23" stroke="#111" stroke-width="2.6"/><path d="M12 2 13 5 16 3 14 6 17 8 13 7 12 10 11 7 8 6 11 5Z" fill="#fff"/></symbol>
<symbol id="wizard" viewBox="0 0 24 24"><rect x="2" y="6" width="6" height="16" fill="#4a80d8"/><path d="M8 5H23L17 10H10M10 12H18" fill="none" stroke="#4a80d8" stroke-width="1.6"/><path d="M11 8 19 23" stroke="#111" stroke-width="2.6"/><path d="M9 1 10 4 13 2 11 5 14 7 10 6 9 9 8 6 5 5 8 4Z" fill="#fff"/><path d="M1 20H10" stroke="#f0c030" stroke-width="2"/></symbol>
<symbol id="robot" viewBox="0 0 24 24"><path d="M8 5 14 1 21 4 18 7 15 5 12 8Z" fill="#777" stroke="#333" stroke-width=".6"/><path d="M13 7C11 12 7 12 6 15" stroke="#555" stroke-width="2" fill="none"/><rect x="4" y="15" width="15" height="6" rx="1" fill="#9a9ab4" stroke="#445" stroke-width=".7"/><circle cx="7" cy="21" r="2.6" fill="#f09a20"/></symbol>
<symbol id="cube3d" viewBox="0 0 18 18"><path d="M9 1 16 4V13L9 17 2 13V4Z" fill="#2cb38c" fill-opacity=".2" stroke="#1ca37a" stroke-width="1.3"/><path d="M2 4 9 8 16 4M9 8V17" stroke="#1ca37a" stroke-width="1.1" fill="none"/><path d="M9 14 17 12" stroke="#e33" stroke-width="1.4"/></symbol>
<symbol id="camic" viewBox="0 0 18 18"><path d="M1 7 14 2 17 13 4 17Z" fill="#fff" stroke="#d62" stroke-width="1.2"/><circle cx="9" cy="9" r="3.6" fill="#d5ddf5" stroke="#2a3aa0" stroke-width="1.2"/><circle cx="9" cy="9" r="1.3" fill="#2a3aa0"/></symbol>
<symbol id="folder" viewBox="0 0 18 18"><path d="M1 5H7L9 7H15V15H1Z" fill="#f8b83c" stroke="#906a18" stroke-width=".8"/><path d="M1 16 4 9H17L14 16Z" fill="#fde28a" stroke="#906a18" stroke-width=".8"/></symbol>
<symbol id="folderx" viewBox="0 0 18 18"><use href="#folder"/><path d="M10 1H16M10 3.4H16" stroke="#2a2a9a" stroke-width=".9"/></symbol>
<symbol id="chk" viewBox="0 0 14 14"><path d="M.3 7 3 4.3 6 7.3 11.5 .3 13.8 3 6 13.8Z" fill="#17b33a"/></symbol>
<symbol id="cbox" viewBox="0 0 14 14"><rect x=".75" y=".75" width="12.5" height="12.5" fill="#fff" stroke="#222" stroke-width="1.3"/><path d="M2.6 7 5 5 6.3 6.8 11 2.2 12.2 4 6.3 11.4Z" fill="#17b33a"/></symbol>
<symbol id="tcsys" viewBox="0 0 18 18"><path d="M3 1V12L15 16" fill="none" stroke="#222"/><path d="M3 12 15 4" stroke="#222"/><path d="M3 3 10 1M5 7 15 9" stroke="#c22" stroke-width=".8"/><path d="M1 3 3 0 5 3Z" fill="#1a1ad0"/></symbol>
<symbol id="tsketch" viewBox="0 0 18 18"><g fill="#fff" stroke="#222" stroke-width="1.1"><rect x="1" y="1" width="6" height="6"/><rect x="1" y="10" width="6" height="6"/><rect x="9" y="10" width="7" height="6"/></g><path d="M10 8 16 1" stroke="#c82" stroke-width="2"/></symbol>
<symbol id="trev" viewBox="0 0 18 18"><path d="M1 3C4 0 14 0 17 3L14 16 9 18 4 16Z" fill="#2a4ac8"/><path d="M5 2H13L11 14 9 16 7 14Z" fill="#e8832c"/><path d="M9 1V16" stroke="#fff"/></symbol>
<symbol id="text" viewBox="0 0 18 18"><path d="M1 3 4 1H16V14H3L1 16Z" fill="#f5a742" stroke="#b06a15"/><path d="M5 1V16M9 1V14M12 1V14" stroke="#b06a15"/><path d="M1 14H16V17H3Z" fill="#5f7ed0"/></symbol>
<symbol id="tfil" viewBox="0 0 18 18"><path d="M1 7C2 3 6 1 10 1L17 2 16 13 8 17 1 14Z" fill="#a6bdf0" stroke="#3a50a8"/><path d="M1 7C3 4 6 3 10 3L17 4 16 6 9 6C5 6 3 7 1 10Z" fill="#ef8a3a"/></symbol>
<symbol id="tabic" viewBox="0 0 18 18"><path d="M1 9 8 6V16L1 15Z" fill="#1c40c8" stroke="#e8f0ff" stroke-width=".5"/><path d="M6 3C7 1 10 1 11 2V8L6 10Z" fill="#2f5ae0" stroke="#e8f0ff" stroke-width=".5"/><path d="M8 10 17 7V14L8 17Z" fill="#1c40c8" stroke="#e8f0ff" stroke-width=".5"/></symbol>
<symbol id="tabdoc" viewBox="0 0 14 14"><path d="M2 1H9L12 4V13H2Z" fill="none" stroke="#fff" stroke-width="1.5"/><path d="M6 9 11 4 13 6 8 11H6Z" fill="#fff"/></symbol>
<symbol id="flag" viewBox="0 0 18 18"><rect x="0" y="0" width="18" height="18" fill="#cfcfcf"/><path d="M3 3 15 5 14 14 3 11Z" fill="#fff"/><path d="M3 3 7 4V7L3 6ZM11 4.5 15 5V8L11 7.5ZM7 7 11 7.5V11L7 10ZM3 9 7 10V12.5L3 11ZM11 10.5 14 11 14 14 11 13Z" fill="#777"/></symbol>
<symbol id="winic" viewBox="0 0 18 18"><path d="M1 4V1H4M14 1H17V4M1 14V17H4M14 17H17V14" fill="none" stroke="#888"/><rect x="4" y="4" width="10" height="10" fill="#e8f0fa" stroke="#555"/><rect x="4" y="5" width="10" height="4" fill="#3e7ed8"/></symbol>
</svg>

<div class="page">
  <div class="topstrip"><span class="ts1"></span><span class="ts2"></span><span class="ts3"></span></div>

  <div class="ribbon">
    <section class="grp g1">
      <div class="body">
        <div class="big w50"><svg class="bi"><use href="#sketch"/></svg><span class="lb">草图</span></div>
        <div class="gal">
          <svg><use href="#spline"/></svg><svg><use href="#srect"/></svg><svg><use href="#sline"/></svg>
          <svg><use href="#sarc"/></svg><svg><use href="#scirc"/></svg><svg><use href="#splus"/></svg>
        </div>
        <div class="scroll"><i class="up"></i><i class="dn"></i><i class="dn dbl"></i></div>
      </div>
      <div class="ft ftg1"><span>直接草图</span><i class="dn fa"></i></div>
    </section>

    <section class="grp g2">
      <div class="body">
        <div class="big w64"><svg class="bi"><use href="#datum"/></svg><span class="lb">基准平面</span><i class="dn"></i></div>
        <div class="big w40"><svg class="bi"><use href="#extrude"/></svg><span class="lb">拉伸</span><i class="dn"></i></div>
        <div class="big w38"><svg class="bi"><use href="#hole"/></svg><span class="lb">孔</span></div>
        <div class="col c82">
          <div class="ci"><svg><use href="#pattern"/></svg>阵列特征</div>
          <div class="ci"><svg><use href="#unite"/></svg>合并<i class="dn ci-dn"></i></div>
          <div class="ci"><svg><use href="#shell"/></svg>抽壳</div>
        </div>
        <div class="big w50"><svg class="bi"><use href="#fillet"/></svg><span class="lb">边倒圆</span><i class="dn"></i></div>
        <div class="col c73">
          <div class="ci"><svg><use href="#chamfer"/></svg>倒斜角</div>
          <div class="ci"><svg><use href="#trim"/></svg>修剪体</div>
          <div class="ci"><svg><use href="#draft"/></svg>拔模</div>
        </div>
        <div class="more"><div class="mbox"><svg><use href="#morefeat"/></svg></div><span class="lb">更多</span><i class="dn"></i></div>
      </div>
      <div class="ft"><span>特征</span><i class="dn fa"></i></div>
    </section>

    <section class="grp g3">
      <div class="body">
        <div class="big w56"><svg class="bi"><use href="#moveface"/></svg><span class="lb">移动面</span></div>
        <div class="col c87">
          <div class="ci"><svg><use href="#offset"/></svg>偏置区域</div>
          <div class="ci"><svg><use href="#replace"/></svg>替换面</div>
          <div class="ci"><svg><use href="#delface"/></svg>删除面</div>
        </div>
        <div class="more"><div class="mbox"><svg><use href="#syncmore"/></svg></div><span class="lb">更多</span><i class="dn"></i></div>
      </div>
      <div class="ft"><span>同步建模</span><i class="dn fa"></i></div>
    </section>

    <section class="grp g4">
      <div class="tools">
        <div class="tr"><b class="c"><svg><use href="#stdbox"/></svg></b><b class="c"><svg><use href="#stack"/></svg></b><b class="c"><svg><use href="#stack2"/></svg></b><u class="vs"></u><b class="c"><svg><use href="#tag"/></svg></b></div>
        <div class="tr"><b class="c"><svg><use href="#bluechk"/></svg></b><b class="c"><svg><use href="#hammer"/></svg></b><b class="c"><svg><use href="#bluechk2"/></svg></b><u class="vs"></u><b class="c"><svg><use href="#pencilist"/></svg></b></div>
      </div>
      <div class="ft ftl"><span>标准化工具...</span><i class="dn fa"></i></div>
    </section>

    <section class="grp g5">
      <div class="tools">
        <div class="tr"><b class="c"><svg><use href="#gearA"/></svg></b><b class="c"><svg><use href="#gearB"/></svg></b></div>
        <div class="tr"><b class="c"><svg><use href="#handd"/></svg></b></div>
      </div>
      <div class="ft ftl"><span>齿...</span><i class="dn fa"></i></div>
    </section>

    <section class="grp g6">
      <div class="tools">
        <div class="tr"><b class="c"><svg><use href="#coil"/></svg></b><b class="c"><svg><use href="#spring"/></svg></b></div>
        <div class="tr"><b class="c"><svg><use href="#roll"/></svg></b><u class="vs"></u><b class="c"><svg><use href="#scissor"/></svg></b></div>
      </div>
      <div class="ft ftl"><span>弹...</span><i class="dn fa"></i></div>
    </section>

    <section class="grp g7">
      <div class="tools">
        <div class="tr"><b class="c"><svg><use href="#vchk"/></svg></b><b class="c"><svg><use href="#vdoc"/></svg></b></div>
        <div class="tr"><b class="c"><svg><use href="#gridv"/></svg></b><b class="c"><svg><use href="#axes3d"/></svg></b></div>
      </div>
      <div class="ft ftl"><span>加...</span><i class="dn fa"></i></div>
    </section>

    <section class="grp g8">
      <div class="tools">
        <div class="tr"><b class="c"><svg><use href="#tri"/></svg></b><b class="c"><svg><use href="#tablet"/></svg></b><b class="c"><svg><use href="#folderst"/></svg></b><b class="c"><svg><use href="#foldercir"/></svg></b></div>
        <div class="tr"><b class="c"><svg><use href="#note"/></svg></b><b class="c"><svg><use href="#brush"/></svg></b><u class="vs"></u><b class="c bino"><svg class="binoc" viewBox="0 0 24 12"><circle cx="7" cy="6" r="5" fill="#444"/><circle cx="17" cy="6" r="5" fill="#444"/><rect x="9" y="3" width="6" height="5" fill="#888"/></svg><span>10H7</span></b></div>
      </div>
      <div class="ft ftl"><span>建模工具 ...</span><i class="dn fa"></i></div>
    </section>

    <section class="grp g9">
      <div class="tools">
        <div class="tr"><b class="c"><svg><use href="#blocks"/></svg></b></div>
        <div class="tr"><b class="c"><svg><use href="#blocks"/></svg></b></div>
      </div>
      <div class="ft ftn"><span>!.</span><i class="dn fa"></i></div>
    </section>

    <section class="grp g10">
      <div class="tools">
        <div class="tr"><b class="c"><svg><use href="#dim1"/></svg></b><u class="vs"></u><b class="c"><svg><use href="#xsym"/></svg></b>
          <b class="c tol">1.00<em>±.05</em></b><b class="c tol">1.00<em>±.88</em></b><b class="c tol">1.00<em>±.88</em></b><b class="c tol">1.00<em>±.89</em></b>
          <b class="c"><svg><use href="#xbox"/></svg></b><b class="c"><svg><use href="#xparen"/></svg></b>
          <b class="c fit">10H7</b><b class="c fit">10H7<span>[18.01]</span></b><b class="c fit">10H7<span>[8.015]</span></b><b class="c fit">10<span>[8.015]</span></b></div>
        <div class="tr"><b class="c dimr"><span>R@!</span><svg viewBox="0 0 24 14"><path d="M2 13 9 3H22" fill="none" stroke="#c22" stroke-width="1.2"/><path d="M2 13 7 11 5 8Z" fill="#c22"/></svg></b><b class="c"><svg viewBox="0 0 24 24"><path d="M3 22 20 3" stroke="#c22" stroke-width="1.2"/><path d="M3 22 6 17 8 20ZM20 3 15 6 18 8Z" fill="#c22"/><path d="M6 11 12 7M11 15 16 11" stroke="#c66" stroke-width="1.4" stroke-dasharray="2 1"/></svg></b><u class="vs"></u><b class="c"><svg><use href="#diam"/></svg></b><b class="c"><svg><use href="#diam"/></svg></b><b class="c"><svg class="sm"><use href="#undo"/></svg></b></div>
      </div>
      <div class="ft"><span>尺寸快速格式化工具 - GC工具箱</span><i class="dn fa"></i></div>
    </section>

    <section class="grp g11">
      <div class="body">
        <div class="big w42"><svg class="bi"><use href="#surface"/></svg><span class="lb">曲面</span><i class="dn"></i></div>
      </div>
      <div class="ft ftn"></div>
    </section>

    <section class="grp g12">
      <div class="body">
        <div class="big w64"><svg class="bi"><use href="#asmgrey"/></svg><span class="lb off">处理装配</span></div>
        <div class="big w40"><svg class="bi"><use href="#add"/></svg><span class="lb">添加</span><i class="dn"></i></div>
        <div class="col c82">
          <div class="ci"><svg><use href="#asmc"/></svg>装配约束</div>
          <div class="ci"><svg><use href="#movec"/></svg>移动组件</div>
          <div class="ci"><svg><use href="#patc"/></svg>阵列组件</div>
        </div>
      </div>
      <div class="ft"><span>装配</span><i class="dn fa"></i></div>
    </section>

    <section class="grp g13">
      <div class="body">
        <div class="big w50"><svg class="bi"><use href="#ruler"/></svg><span class="lb">测量</span></div>
      </div>
      <div class="ft ftl"><span>分析</span><i class="dn fa"></i></div>
    </section>
    <div class="ribbon-end"><i class="dn"></i></div>
  </div>

  <div class="toolbar">
    <div class="menu"><svg><use href="#menuic"/></svg><span>菜单(<u>M</u>)</span><i class="dn"></i></div>
    <u class="vsep"></u>
    <div class="sel s1"><span>无选择过滤器</span><i class="dn"></i></div>
    <div class="sel s2"><span>整个装配</span><i class="dn"></i></div>
    <b class="tb"><svg><use href="#fgrey1"/></svg></b>
    <b class="tb"><svg><use href="#fgrey2"/></svg></b>
    <b class="tb"><svg><use href="#filterred"/></svg></b><i class="dd ddn"><i class="dn"></i></i>
    <b class="tb"><svg><use href="#fgrey3"/></svg></b>
    <b class="tb"><svg><use href="#fgrey4"/></svg></b>
    <b class="tb"><svg><use href="#selred"/></svg></b>
    <b class="tb"><svg><use href="#seldash"/></svg></b><i class="dd ddn"><i class="dn"></i></i>
    <b class="tb sh"><svg><use href="#box1"/></svg></b>
    <b class="tb"><svg><use href="#box2"/></svg></b>
    <b class="tb on"><svg><use href="#snapc"/></svg></b>
    <b class="tb on"><svg><use href="#endp"/></svg></b>
    <b class="tb on"><svg><use href="#midp"/></svg></b>
    <b class="tb"><svg><use href="#curvp"/></svg></b>
    <b class="tb on"><svg><use href="#intp"/></svg></b>
    <b class="tb on"><svg><use href="#wave"/></svg></b>
    <b class="tb"><svg><use href="#tanp"/></svg></b>
    <b class="tb on"><svg><use href="#cenp"/></svg></b>
    <b class="tb"><svg><use href="#quad"/></svg></b>
    <b class="tb on"><svg><use href="#crossp"/></svg></b>
    <b class="tb on"><svg><use href="#midp"/></svg></b>
    <b class="tb"><svg><use href="#facep"/></svg></b>
    <b class="tb"><svg><use href="#meshp"/></svg></b>
    <b class="tb"><svg><use href="#gridp"/></svg></b>
    <u class="vsep v2"></u>
    <b class="tb"><svg><use href="#zoomf"/></svg></b>
    <b class="tb"><svg><use href="#pan"/></svg></b>
    <b class="tb"><svg><use href="#rotate"/></svg></b>
    <b class="tb"><svg><use href="#persp"/></svg></b>
    <b class="tb"><svg><use href="#lightdoc"/></svg></b>
    <b class="tb"><svg><use href="#winlay"/></svg></b><i class="dd"><i class="dn"></i></i>
    <b class="tb"><svg><use href="#render"/></svg></b><i class="dd"><i class="dn"></i></i>
    <b class="tb"><svg><use href="#cubebl"/></svg></b><i class="dd"><i class="dn"></i></i>
    <b class="tb"><svg><use href="#vis"/></svg></b><i class="dd"><i class="dn"></i></i>
    <u class="vsep v3"></u>
    <i class="dn tbend"></i>
  </div>

  <div class="main">
    <aside class="side">
      <b><svg class="gearic"><use href="#gear"/></svg></b><span></span>
      <b><svg><use href="#navasm"/></svg></b>
      <b><svg><use href="#navcon"/></svg></b>
      <b class="act"><svg><use href="#navpart"/></svg></b>
      <b><svg><use href="#books"/></svg></b>
      <b><svg><use href="#infoic"/></svg></b>
      <b><svg><use href="#webdoc"/></svg></b>
      <b><svg><use href="#clock"/></svg></b>
      <b><svg><use href="#rainbow"/></svg></b>
      <b><svg><use href="#wizard"/></svg></b>
      <b><svg><use href="#robot"/></svg></b>
    </aside>

    <section class="nav">
      <header class="navhead"><span>部件导航器</span><i class="maxi"></i></header>
      <div class="tbox">
        <div class="thead"><div class="hc hname">名称<i class="sortup"></i></div><div class="hc">最新</div><div class="hc">附注</div></div>
        <div class="tbody">
          <div class="row t1"><div class="nm"><i class="exp">+</i><svg class="ti"><use href="#cube3d"/></svg>模型视图</div><div></div><div></div></div>
          <div class="row alt t1"><div class="nm"><i class="exp">+</i><svg class="ck ckm"><use href="#chk"/></svg><svg class="ti"><use href="#camic"/></svg>摄像机</div><div></div><div></div></div>
          <div class="row t1"><div class="nm nb"><svg class="ti"><use href="#folderx"/></svg>用户表达式</div><div></div><div></div></div>
          <div class="row alt t1"><div class="nm nb"><svg class="ti"><use href="#folder"/></svg>非时间戳记几何体</div><div></div><div></div></div>
          <div class="row t1e"><div class="nm"><i class="exp">−</i><svg class="ti"><use href="#folder"/></svg>模型历史记录</div><div></div><div></div></div>
          <div class="row alt t2"><div class="nm2 dim"><svg class="cb"><use href="#cbox"/></svg><svg class="ti"><use href="#tcsys"/></svg>基准坐标系 (0)</div><div class="st"><svg class="ck"><use href="#chk"/></svg></div><div></div></div>
          <div class="row t2"><div class="nm2 dim"><svg class="cb"><use href="#cbox"/></svg><svg class="ti"><use href="#tsketch"/></svg>草图 (1) "SKETCH_000"</div><div class="st"><svg class="ck"><use href="#chk"/></svg></div><div></div></div>
          <div class="row alt t2"><div class="nm2 dim"><svg class="cb"><use href="#cbox"/></svg><svg class="ti"><use href="#tsketch"/></svg>草图 (2) "SKETCH_001"</div><div class="st"><svg class="ck"><use href="#chk"/></svg></div><div></div></div>
          <div class="row t2"><div class="nm2"><svg class="cb"><use href="#cbox"/></svg><svg class="ti"><use href="#trev"/></svg>旋转 (3)</div><div class="st"><svg class="ck"><use href="#chk"/></svg></div><div></div></div>
          <div class="row alt t2"><div class="nm2"><svg class="cb"><use href="#cbox"/></svg><svg class="ti"><use href="#text"/></svg>拉伸 (4)</div><div class="st"><svg class="ck"><use href="#chk"/></svg></div><div></div></div>
          <div class="row t2"><div class="nm2 dim"><svg class="cb"><use href="#cbox"/></svg><svg class="ti"><use href="#tsketch"/></svg>草图 (5) "SKETCH_002"</div><div class="st"><svg class="ck"><use href="#chk"/></svg></div><div></div></div>
          <div class="row alt t2"><div class="nm2"><svg class="cb"><use href="#cbox"/></svg><svg class="ti"><use href="#tfil"/></svg>边倒圆 (11)</div><div class="st"><svg class="ck"><use href="#chk"/></svg></div><div></div></div>
          <div class="row t2e"><div class="nm2 cur"><svg class="cb"><use href="#cbox"/></svg><svg class="ti"><use href="#tfil"/></svg>边倒圆 (13)</div><div class="st"><svg class="ck"><use href="#chk"/></svg></div><div></div></div>
          <div class="row alt"><div></div><div></div><div></div></div><div class="row"><div></div><div></div><div></div></div>
          <div class="row alt"><div></div><div></div><div></div></div><div class="row"><div></div><div></div><div></div></div>
          <div class="row alt"><div></div><div></div><div></div></div><div class="row"><div></div><div></div><div></div></div>
          <div class="row alt"><div></div><div></div><div></div></div><div class="row"><div></div><div></div><div></div></div>
          <div class="row alt"><div></div><div></div><div></div></div><div class="row"><div></div><div></div><div></div></div>
          <div class="row alt"><div></div><div></div><div></div></div><div class="row"><div></div><div></div><div></div></div>
          <div class="row alt"><div></div><div></div><div></div></div><div class="row"><div></div><div></div><div></div></div>
          <div class="row alt"><div></div><div></div><div></div></div>
        </div>
        <div class="hscroll"><i class="al"></i><div class="trk"><div class="thumb"></div></div><i class="ar"></i></div>
      </div>
      <div class="grip"></div>
      <div class="sec"><span>相关性</span><svg viewBox="0 0 14 12"><path d="M1.5 1 7 10.5 12.5 1" fill="none" stroke="#006a80" stroke-width="2.4"/></svg></div>
      <div class="sec"><span>细节</span><svg viewBox="0 0 14 12"><path d="M1.5 1 7 10.5 12.5 1" fill="none" stroke="#006a80" stroke-width="2.4"/></svg></div>
      <div class="sec"><span>预览</span><svg viewBox="0 0 14 12"><path d="M1.5 1 7 10.5 12.5 1" fill="none" stroke="#006a80" stroke-width="2.4"/></svg></div>
    </section>

    <section class="view">
      <div class="tabs"><div class="tab"><svg class="tabi"><use href="#tabic"/></svg><span>32.prt</span><svg class="tabd"><use href="#tabdoc"/></svg><svg class="tabx" viewBox="0 0 10 10"><path d="M1.5 1.5 8.5 8.5M8.5 1.5 1.5 8.5" stroke="#fff" stroke-width="2.2"/></svg></div></div>
      <div class="canvas">
        <i class="mark"></i>
        <svg class="model" viewBox="0 0 1425 777" xmlns="http://www.w3.org/2000/svg">
          <defs>
            <linearGradient id="mBase" gradientUnits="userSpaceOnUse" x1="40" y1="1150" x2="1170" y2="1150">
              <stop offset="0" stop-color="#bf7a00"/><stop offset=".2" stop-color="#ad6900"/><stop offset=".33" stop-color="#a56200"/><stop offset=".55" stop-color="#c67c00"/><stop offset=".8" stop-color="#ec9000"/><stop offset="1" stop-color="#ff9d00"/>
            </linearGradient>
            <linearGradient id="mFace" gradientUnits="userSpaceOnUse" x1="640" y1="400" x2="1300" y2="780">
              <stop offset="0" stop-color="#ff9c00"/><stop offset=".18" stop-color="#ffab00"/><stop offset=".42" stop-color="#ffc800"/><stop offset=".62" stop-color="#ffc500"/><stop offset=".72" stop-color="#ffb400"/><stop offset="1" stop-color="#ffb000"/>
            </linearGradient>
            <linearGradient id="mLow" gradientUnits="userSpaceOnUse" x1="480" y1="880" x2="480" y2="1068">
              <stop offset="0" stop-color="#ffa800"/><stop offset=".45" stop-color="#f59a00"/><stop offset="1" stop-color="#a86800"/>
            </linearGradient>
            <radialGradient id="mVal" gradientUnits="userSpaceOnUse" cx="510" cy="760" r="240">
              <stop offset="0" stop-color="#ffd030"/><stop offset=".5" stop-color="#ffc320"/><stop offset="1" stop-color="#ffa800"/>
            </radialGradient>
            <filter id="blur10" x="-30%" y="-30%" width="160%" height="160%"><feGaussianBlur stdDeviation="10 8"/></filter>
            <filter id="blur20" x="-30%" y="-30%" width="160%" height="160%"><feGaussianBlur stdDeviation="24 18"/></filter>
            <clipPath id="baseClip"><path d="M38 1020 105 1370C115 1430 190 1490 340 1500 620 1505 1000 1350 1250 1170 1400 1060 1530 920 1550 800 1550 770 1540 750 1530 720L1430 460 38 1020Z"/></clipPath>
            <clipPath id="ringClip"><path id="ringP" d="M688 55C620 110 560 300 532 520 528 700 560 790 610 875 630 915 660 945 690 968 760 990 840 985 900 960 1080 880 1240 760 1340 650 1400 590 1430 520 1432 470 1420 400 1340 310 1240 275 1190 265 1150 240 1100 210 1030 170 960 130 900 90 870 60 820 40 760 43 730 44 710 48 688 55Z"/></clipPath>
          </defs>
          <g transform="translate(548 88) scale(.40816 .33333)">
            <path d="M38 1020 105 1370C115 1430 190 1490 340 1500 620 1505 1000 1350 1250 1170 1400 1060 1530 920 1550 800 1550 770 1540 750 1530 720L1430 460 900 700 38 1020Z" fill="url(#mBase)"/>
            <g clip-path="url(#baseClip)"><path d="M100 1390C120 1450 190 1495 340 1505 500 1508 650 1475 800 1425" fill="none" stroke="#ff9a00" stroke-width="40" filter="url(#blur20)" opacity=".9"/></g>
            <!-- whole upper shape -->
            <path d="M38 1020C25 960 40 900 75 830 130 720 250 610 385 525 400 420 440 250 520 140 570 80 640 60 760 43 820 40 870 60 900 90 960 130 1030 170 1100 210 1150 240 1190 265 1240 275 1340 310 1420 400 1432 470 1430 520 1400 590 1340 650 1240 760 1080 880 900 960 840 985 760 990 690 968 640 1000 540 1060 420 1065 380 1067 340 1060 303 1050 270 1090 230 1115 180 1115 120 1110 70 1080 38 1020Z" fill="#ffa800"/>
            <!-- left pad -->
            <path d="M75 920C75 860 120 770 200 680 250 625 320 570 380 540L362 740 300 960C285 990 250 1020 205 1015 140 1015 85 975 75 920Z" fill="#ffac00"/>
            <!-- left rim ridge -->
            <path d="M555 105C490 190 440 350 420 480 400 620 385 780 342 932 330 980 320 1020 303 1050 295 1030 285 1010 285 975 300 960 320 900 345 810 370 700 385 525 400 420 440 250 520 140Z" fill="#ff9f00"/>
            <!-- valley strip -->
            <path d="M555 105C590 80 640 65 688 55 620 110 560 300 532 520 528 700 560 790 610 875L540 877C480 880 400 900 342 932 385 780 400 620 420 480 440 350 490 190 555 105Z" fill="#ffb000"/>
            <path d="M532 520C528 700 560 790 610 875L540 877C480 880 400 900 342 932 385 780 395 640 410 560 450 520 500 510 532 520Z" fill="url(#mVal)"/>
            <!-- lower valley -->
            <path d="M342 932C400 900 480 880 540 877L610 875C630 915 660 945 690 968 600 1020 520 1060 420 1065 380 1067 340 1062 303 1050 320 1020 330 980 342 932Z" fill="url(#mLow)"/>
            <!-- ring -->
            <use href="#ringP" fill="#ffb600"/>
            <g clip-path="url(#ringClip)">
              <path d="M1432 470C1430 520 1400 590 1340 650 1240 760 1080 880 900 960 840 985 760 990 690 968" fill="none" stroke="#ff9c00" stroke-width="26" filter="url(#blur10)"/>
              <path d="M1395 470C1380 560 1300 660 1200 735 1120 795 1030 850 900 905" fill="none" stroke="#ffcf00" stroke-width="60" filter="url(#blur10)"/>
              <path d="M572 560C570 680 590 790 660 880 720 930 820 930 900 905" fill="none" stroke="#ffd200" stroke-width="56" filter="url(#blur10)"/>
              <path d="M1200 745C1120 800 1040 840 980 865" fill="none" stroke="#fff030" stroke-width="16" filter="url(#blur10)"/>
              <path d="M573 600C572 680 590 740 615 790" fill="none" stroke="#ffe520" stroke-width="14" filter="url(#blur10)"/>
              <path d="M610 180C580 300 570 420 575 540" fill="none" stroke="#ffcc00" stroke-width="40" filter="url(#blur10)"/>
              <path d="M1270 300C1340 330 1390 400 1395 470" fill="none" stroke="#ffc400" stroke-width="44" filter="url(#blur10)"/>
              <path d="M700 70C770 50 830 60 885 118" fill="none" stroke="#ffc000" stroke-width="30" filter="url(#blur10)"/>
            </g>
            <!-- main face -->
            <path d="M885 118C1000 160 1100 225 1208 282 1300 320 1355 380 1355 450 1340 560 1230 660 1130 735 1050 790 960 835 875 870 820 895 760 895 710 880 650 850 615 750 612 605 612 500 625 380 650 270 680 170 730 110 820 103 850 103 870 110 885 118Z" fill="url(#mFace)"/>
            <!-- edges -->
            <g fill="none" stroke="#2d2d3a" stroke-width=".8" opacity=".85">
              <path vector-effect="non-scaling-stroke" d="M688 55C620 110 560 300 532 520 528 700 560 790 610 875 630 915 660 945 690 968 760 990 840 985 900 960 1080 880 1240 760 1340 650 1400 590 1430 520 1432 470"/>
              <path vector-effect="non-scaling-stroke" d="M885 118C1000 160 1100 225 1208 282 1300 320 1355 380 1355 450 1340 560 1230 660 1130 735 1050 790 960 835 875 870 820 895 760 895 710 880 650 850 615 750 612 605 612 500 625 380 650 270 680 170 730 110 820 103 850 103 870 110 885 118 885 90 860 65 830 52"/>
              <path vector-effect="non-scaling-stroke" d="M885 118 612 605M1208 282 875 870M532 585C560 580 590 590 612 605M610 875 658 836M710 880 690 968M875 870 900 960"/>
              <path vector-effect="non-scaling-stroke" d="M555 105C490 190 440 350 420 480 400 620 385 780 342 932 330 980 320 1020 303 1050"/>
              <path vector-effect="non-scaling-stroke" d="M342 932C400 900 480 880 540 877L610 875M303 1050C340 1062 380 1067 420 1065 520 1060 600 1020 690 968"/>
              <path vector-effect="non-scaling-stroke" d="M380 540C320 570 250 625 200 680 120 770 75 860 75 920 85 975 140 1015 205 1015 250 1020 285 990 300 960 330 890 345 830 362 740L205 1015 180 1060 178 1115M285 975C285 1010 290 1035 303 1050M320 912 342 932M372 640C380 620 395 615 405 612"/>
              <path vector-effect="non-scaling-stroke" d="M38 1020C70 1080 120 1110 180 1115 230 1115 270 1090 303 1050"/>
              <path vector-effect="non-scaling-stroke" d="M1240 275C1230 270 1220 272 1208 282M1030 172 1032 158M1095 212 1102 204"/>
              <path vector-effect="non-scaling-stroke" d="M340 1500C620 1505 1000 1350 1250 1170 1400 1060 1530 920 1550 800" stroke-opacity=".75"/>
            </g>
          </g>
          <!-- triad -->
          <g transform="translate(-492 -172)">
            <g fill="none" stroke="#bbbfbf" stroke-width="1.2"><path d="M553 851 577 846 586 868 564 880ZM553 851 561 866 586 868M561 866 564 880"/></g>
            <path d="M554 884 565 866" stroke="#a8cca8" stroke-width="3"/>
            <path d="M554 884 544 855" stroke="#1030d0" stroke-width="2.6"/><path d="M543 849 540 860 548 858Z" fill="#1030d0"/>
            <path d="M555 884 586 877" stroke="#c82828" stroke-width="2.6"/><path d="M594 876 583 873 585 881Z" fill="#c82828"/>
            <circle cx="554" cy="885" r="4" fill="#b8b8b8"/>
            <text x="537" y="847" class="axz">Z</text><text x="594" y="881" class="axx">X</text>
          </g>
        </svg>
      </div>
    </section>
  </div>

  <footer class="status"><span>选择对象并使用 MB3，或者双击某一对象</span><svg class="stflag"><use href="#flag"/></svg><svg class="stwin"><use href="#winic"/></svg></footer>
  <div class="blackbar"></div>

  <div class="wm">
    <svg class="wmhex" viewBox="0 0 72 82">
      <path d="M36 0 72 21V61L36 82 0 61V21Z" fill="#8fd0f5" opacity=".75"/>
      <path d="M36 0 72 21 53 10C56 20 56 26 54 32L36 22 18 32C10 28 5 26 0 21Z" fill="#cfe7f6" opacity=".7"/>
      <path d="M0 21C10 26 18 28 18 32V50L0 61Z" fill="#b4dcf5" opacity=".7"/>
      <path d="M36 22 54 32V52L36 62 18 52V32Z" fill="#e6e7e9"/>
      <path d="M36 27 50 35 36 43 22 35Z" fill="#cde6f6"/><path d="M22 35 36 43V57L22 49Z" fill="#a6d6f4"/><path d="M36 43 50 35V49L36 57Z" fill="#74c2ec"/>
    </svg>
    <div class="wmtext"><div class="wmt1">3D世界网</div><div class="wmt2">WWW.3DSJW.COM</div></div>
  </div>
</div>
</body>
</html>
```
FILE: styles.css
```css
* { box-sizing: border-box; }
html, body { margin: 0; padding: 0; }
body { width: 1917px; height: 974px; overflow: hidden; background: #fff; font-family: "Noto Sans", "Noto Sans CJK SC", sans-serif; font-size: 14px; color: #1c1c1c; }
.defs { position: absolute; width: 0; height: 0; overflow: hidden; }
i, b, u, em { font-style: normal; font-weight: normal; text-decoration: none; }
svg { display: block; flex: none; }
.page { position: relative; width: 1917px; height: 974px; display: flex; flex-direction: column; overflow: hidden; }

.topstrip { display: flex; height: 4px; flex: none; }
.ts1 { width: 88px; background: #55a0b8; }
.ts2 { width: 60px; background: #fff; }
.ts3 { flex: 1; background: #dcdcdc; }

.dn { display: inline-block; width: 0; height: 0; border-left: 4px solid transparent; border-right: 4px solid transparent; border-top: 5px solid #222; flex: none; }

.ribbon { display: flex; height: 106px; flex: none; padding-top: 5px; background: #fff; border-bottom: 2px solid #dcdcdc; position: relative; }
.grp { display: flex; flex-direction: column; height: 96px; border-right: 1px solid #dddddd; flex: none; }
.g1 { width: 197px; } .g2 { width: 410px; } .g3 { width: 193px; } .g4 { width: 104px; } .g5 { width: 53px; }
.g6 { width: 57px; } .g7 { width: 52px; } .g8 { width: 98px; } .g9 { width: 30px; } .g10 { width: 287px; }
.g11 { width: 43px; } .g12 { width: 205px; } .g13 { width: 55px; }
.body { display: flex; height: 79px; flex: none; }
.g2 .body { padding-left: 8px; } .g3 .body { padding-left: 6px; } .g12 .body { padding-left: 9px; } .g13 .body { padding-left: 4px; }
.big { display: flex; flex-direction: column; align-items: center; flex: none; }
.w38 { width: 38px; } .w40 { width: 40px; } .w42 { width: 42px; } .w50 { width: 50px; } .w56 { width: 56px; } .w64 { width: 64px; }
.bi { width: 34px; height: 34px; }
.lb { height: 26px; line-height: 26px; white-space: nowrap; }
.off { color: #c4c4c4; }
.big .dn { margin-top: 2px; }

.gal { margin-left: 4px; width: 116px; height: 77px; border: 1px solid #dcdcdc; display: grid; grid-template-columns: repeat(3, 1fr); grid-template-rows: repeat(2, 1fr); justify-items: center; align-items: center; padding: 0 2px; }
.gal svg { width: 30px; height: 30px; }
.scroll { width: 22px; display: flex; flex-direction: column; align-items: center; padding-top: 11px; gap: 20px; }
.up { width: 0; height: 0; border-left: 4px solid transparent; border-right: 4px solid transparent; border-bottom: 5px solid #bdbdbd; }
.dbl { position: relative; }
.dbl::before { content: ""; position: absolute; left: -4px; top: -8px; width: 8px; height: 1.5px; background: #222; }

.col { display: flex; flex-direction: column; gap: 8px; flex: none; }
.c82 { width: 82px; margin-left: 8px; } .c73 { width: 73px; margin-left: 5px; } .c87 { width: 87px; margin-left: 2px; }
.g12 .c82 { margin-left: 5px; }
.ci { display: flex; align-items: center; gap: 5px; height: 18px; white-space: nowrap; }
.ci svg { width: 16px; height: 16px; }
.ci-dn { margin-left: 6px; }
.more { width: 37px; flex: none; display: flex; flex-direction: column; align-items: center; }
.mbox { width: 37px; height: 34px; border: 1px solid #dcdcdc; border-radius: 3px; display: flex; align-items: center; justify-content: center; }
.mbox svg { width: 22px; height: 22px; }
.more .dn { margin-top: 2px; }

.tools { height: 79px; padding: 2px 0 0 4px; flex: none; }
.tr { display: flex; height: 31px; align-items: center; }
.c { width: 23px; height: 31px; display: flex; align-items: center; justify-content: center; flex: none; }
.c svg { width: 20px; height: 20px; }
.c svg.sm { width: 14px; height: 14px; }
.vs { width: 6px; flex: none; display: flex; justify-content: center; }
.vs::before { content: ""; width: 1px; height: 22px; background: #dddddd; }
.tol { flex-direction: column; font: 9px/9px "Liberation Sans Narrow", "Liberation Sans", sans-serif; color: #222; }
.tol em { color: #b03a3a; }
.fit { flex-direction: column; font: 9px/9px "Liberation Sans Narrow", "Liberation Sans", sans-serif; color: #3a3ab8; white-space: nowrap; }
.fit span { font-size: 7px; line-height: 8px; }
.c.bino { flex-direction: column; font: 700 9px/10px "Liberation Sans Narrow", "Liberation Sans", sans-serif; color: #333; }
.c .binoc { width: 20px; height: 10px; }
.c.dimr { flex-direction: column; font: 8px/8px "Liberation Sans Narrow", "Liberation Sans", sans-serif; color: #c44; align-items: flex-end; }
.c.dimr svg { height: 12px; }

.ft { position: relative; height: 17px; line-height: 22px; padding-right: 22px; text-align: center; color: #1a7fa5; white-space: nowrap; flex: none; }
.ftg1 { padding-right: 27px; }
.ftl { text-align: left; padding-left: 3px; padding-right: 0; }
.ftn { text-align: left; padding-left: 2px; padding-right: 0; }
.fa { position: absolute; right: 9px; top: 6px; }
.g1 .fa { right: 10px; }
.ribbon-end { flex: 1; position: relative; }
.ribbon-end .dn { position: absolute; right: 7px; top: 85px; }

.toolbar { display: flex; align-items: center; height: 36px; flex: none; background: #fff; border-bottom: 2px solid #a8a8a8; padding-top: 1px; position: relative; }
.menu { display: flex; align-items: center; width: 96px; padding-left: 7px; gap: 3px; flex: none; }
.menu svg { width: 17px; height: 17px; }
.menu u { text-decoration: underline; }
.menu .dn { margin-left: 5px; }
.vsep { width: 1px; height: 28px; background: #dcdcdc; flex: none; }
.v2 { margin: 0 7px 0 6px; }
.v3 { margin-left: 8px; }
.sel { height: 23px; border: 1px solid #aaa; display: flex; align-items: center; justify-content: space-between; padding: 0 7px 0 3px; flex: none; }
.sel .dn { border-left-width: 5px; border-right-width: 5px; border-top-width: 6px; }
.s1 { width: 167px; margin-left: 12px; }
.s2 { width: 176px; margin-left: 9px; margin-right: 3.5px; }
.tb { width: 25px; height: 24px; display: flex; align-items: center; justify-content: center; flex: none; }
.tb svg { width: 20px; height: 20px; }
.tb.on { background: #cbe4ea; border: 1px solid #a9d3dc; margin: 0 .5px; width: 24px; }
.tb.sh { margin-left: 6.5px; }
.dd { width: 15px; display: flex; justify-content: center; flex: none; }
.ddn { width: 10px; }
.tbend { position: absolute; right: 7px; top: 23px; }

.main { display: flex; flex: 1; min-height: 0; }
.side { width: 29px; flex: none; background: #d8d8d8; border-right: 1px solid #a8a8a8; display: grid; grid-template-rows: 26px 18px 41px 40px 44px 45px 60px 50px 50px 40px 42px 40px 1fr; justify-items: center; align-items: center; }
.side svg { width: 24px; height: 24px; }
.side b { width: 100%; height: 100%; display: flex; align-items: center; justify-content: center; }
.side .gearic { width: 16px; height: 16px; margin-right: 3px; }
.side .act { background: #fff; width: calc(100% + 1px); margin-right: -1px; position: relative; }

.nav { width: 462px; flex: none; background: #fff; padding-left: 6px; padding-right: 9px; }
.navhead { height: 31px; display: flex; align-items: center; justify-content: space-between; padding: 0 4px 0 4px; font-size: 15px; color: #333; }
.maxi { width: 15px; height: 13px; border: 1px solid #222; border-top-width: 2px; margin-top: 0; }
.tbox { border: 2px solid #d0d0d0; border-bottom: 0; height: 677px; display: flex; flex-direction: column; }
.thead { display: grid; grid-template-columns: 310px 100px 33px; height: 24px; flex: none; background: #f0f0f0; border-bottom: 2px solid #d4d4d4; font-size: 15px; color: #333; overflow: hidden; }
.hc { padding-left: 6px; line-height: 22px; border-right: 2px solid #d8d8d8; white-space: nowrap; overflow: hidden; position: relative; }
.hc:last-child { border-right: 0; }
.sortup { position: absolute; left: 53px; top: 8px; border-left: 6px solid transparent; border-right: 6px solid transparent; border-bottom: 6px solid #111; }
.tbody { height: 628px; overflow: hidden; flex: none; }
.row { display: grid; grid-template-columns: 310px 100px 33px; height: 24px; background: #fff; position: relative; border-bottom: 1px solid #ececec; }
.row.alt { background: #f9f9f9; }
.row > div { border-right: 1px solid #ececec; }
.row > div:last-child { border-right: 0; }
.nm, .nm2 { display: flex; align-items: center; font-size: 15px; white-space: nowrap; position: relative; color: #2a2a2a; }
.nm { padding-left: 4px; }
.nb { padding-left: 19px; }
.nm2 { padding-left: 40px; }
.exp { width: 12px; height: 12px; border: 1px solid #bbb; background: #fff; font: 12px/9px "Liberation Sans", sans-serif; text-align: center; margin-right: 3px; position: relative; z-index: 1; color: #111; }
.ti { width: 17px; height: 17px; margin-right: 2px; }
.ck { width: 14px; height: 14px; }
.ckm { margin: 0 1px 0 2px; }
.ckm + .ti { margin-right: 1px; width: 16px; height: 16px; }
.cb { width: 13px; height: 13px; margin-right: 2px; }
.nm2 .ti { margin-right: 3px; width: 16px; height: 16px; }
.dim { color: #ababab; }
.cur { font-weight: 700; color: #1c1c1c; }
.st { display: flex; align-items: center; padding-left: 6px; }
.t1 .nm::before, .t1e .nm::before { content: ""; position: absolute; left: 9px; top: 0; bottom: 0; border-left: 1px dotted #999; }
.t1e .nm::before { bottom: 50%; }
.nb::after { content: ""; position: absolute; left: 10px; top: 50%; width: 8px; border-top: 1px dotted #999; }
.t2 .nm2::before, .t2e .nm2::before { content: ""; position: absolute; left: 28px; top: 0; bottom: 0; border-left: 1px dotted #999; }
.t2e .nm2::before { bottom: 50%; }
.nm2::after { content: ""; position: absolute; left: 29px; top: 50%; width: 10px; border-top: 1px dotted #999; }
.hscroll { height: 21px; flex: none; background: #f0f0f0; display: flex; align-items: center; margin-top: 1px; }
.al, .ar { width: 21px; display: flex; justify-content: center; flex: none; }
.al::before, .ar::before { content: ""; width: 7px; height: 7px; border-left: 2px solid #555; border-bottom: 2px solid #555; transform: rotate(45deg); margin-left: 3px; }
.ar::before { transform: rotate(-135deg); margin-left: -3px; }
.trk { flex: 1; height: 100%; }
.thumb { width: 348px; height: 100%; background: #c9c9c9; }
.grip { height: 6px; border: 1px solid #aaa; background: #dadada; }
.sec { height: 28px; border-bottom: 3px solid #d2d2d2; display: flex; align-items: center; justify-content: space-between; padding: 0 7px; font-size: 18px; line-height: 25px; color: #2484a8; }
.sec svg { width: 14px; height: 12px; margin-top: -4px; }

.view { flex: 1; display: flex; flex-direction: column; min-width: 0; }
.tabs { height: 26px; flex: none; background: #fff; border-bottom: 2px solid #55a0b8; }
.tab { width: 106px; height: 24px; background: #55a0b8; color: #f2f8fa; display: flex; align-items: center; padding-left: 7px; font-size: 15px; }
.tabi { width: 15px; height: 15px; margin-right: 5px; }
.tabd { width: 12px; height: 12px; margin-left: 7px; }
.tabx { width: 10px; height: 10px; margin-left: 4px; }
.canvas { flex: 1; position: relative; background: linear-gradient(#b3b5b7 0, #b9bbbd 11%, #e6e7e9 78%, #e7e8ea 100%); overflow: hidden; }
.mark { position: absolute; right: 15px; top: 5px; width: 3px; height: 21px; background: #78b800; }
.model { position: absolute; left: 0; top: 0; width: 1425px; height: 777px; }
.axz { font: 11px "Liberation Sans", sans-serif; fill: #2a5ae0; }
.axx { font: 11px "Liberation Sans", sans-serif; fill: #d84040; }

.status { height: 23px; flex: none; border-top: 1px solid #a8a8a8; background: #fff; display: flex; align-items: center; font-size: 14px; font-weight: 500; color: #111; padding-bottom: 2px; position: relative; }
.status span { flex: 1; }
.stflag { width: 15px; height: 15px; margin-right: 5px; }
.stwin { width: 16px; height: 16px; margin-right: 55px; }
.blackbar { height: 2px; background: #111; flex: none; }

.wm { position: absolute; left: 1634px; top: 879px; display: flex; gap: 9px; pointer-events: none; }
.wmhex { width: 72px; height: 82px; opacity: .85; }
.wmtext { color: #eef0f2; font-family: "Liberation Sans", "Noto Sans CJK SC", sans-serif; font-weight: 700; padding-top: 12px; }
.wmt1 { font-size: 40px; line-height: 40px; letter-spacing: 1px; white-space: nowrap; }
.wmt2 { font-size: 11px; line-height: 14px; letter-spacing: 2.4px; margin-top: 4px; white-space: nowrap; }
```
